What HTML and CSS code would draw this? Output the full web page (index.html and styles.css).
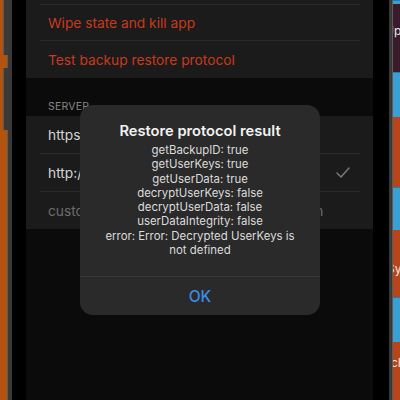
FILE: index.html
```html
<!DOCTYPE html>
<html>
<head>
<meta charset="utf-8">
<link rel="stylesheet" href="styles.css">
</head>
<body>
<div class="stage">
  <div class="left-edge">
    <div class="btn btn-a"></div>
    <div class="btn btn-b"></div>
  </div>
  <div class="frame frame-l"></div>
  <div class="bezel bezel-l"></div>
  <div class="screen">
    <div class="card">
      <div class="row row-top"></div>
      <div class="row danger">Wipe state and kill app</div>
      <div class="row danger last">Test backup restore protocol</div>
    </div>
    <div class="section-header">SERVER</div>
    <div class="card card-server">
      <div class="row">https://sync.standardnotes.org</div>
      <div class="row">http://localhost:3000
        <svg class="check" width="14" height="11" viewBox="0 0 14 11"><path d="M1 6 L5 10 L13 1" fill="none" stroke="#7c7c7c" stroke-width="1.4" stroke-linecap="round" stroke-linejoin="round"/></svg>
      </div>
      <div class="row last placeholder">custom server URL e.g. https://my-domain</div>
    </div>
    <div class="alert">
      <div class="alert-body">
        <div class="alert-title">Restore protocol result</div>
        <div class="alert-msg">getBackupID: true<br>getUserKeys: true<br>getUserData: true<br>decryptUserKeys: false<br>decryptUserData: false<br>userDataIntegrity: false<br>error: Error: Decrypted UserKeys is not defined</div>
      </div>
      <div class="alert-btn">OK</div>
    </div>
  </div>
  <div class="bezel bezel-r"></div>
  <div class="frame frame-r"></div>
  <div class="right-edge">
    <div class="seg blue s1"></div>
    <div class="seg purple s2"><span class="frag f1">Up</span></div>
    <div class="seg blue s3"></div>
    <div class="seg orange s4"></div>
    <div class="seg blue s5"></div>
    <div class="seg orange s6"><span class="frag f2">Sys</span></div>
    <div class="seg blue s7"></div>
    <div class="seg orange s8"><span class="frag f3">cH</span></div>
  </div>
</div>
</body>
</html>
```
FILE: styles.css
```css
* { box-sizing: border-box; }
html, body { margin: 0; padding: 0; }
body {
  width: 400px;
  height: 400px;
  overflow: hidden;
  background: #000;
  font-family: Inter, "Noto Sans", sans-serif;
}
.stage {
  display: flex;
  width: 400px;
  height: 400px;
}
.left-edge {
  width: 7px;
  background: #b4530d;
  position: relative;
}
.btn {
  position: absolute;
  left: 3px;
  width: 5px;
  background: #3a3a3a;
  border-left: 1px solid #5a5a5a;
  border-radius: 1px 0 0 1px;
}
.btn-a { top: -4px; height: 59px; }
.btn-b { top: 68px; height: 62px; }
.frame {
  width: 5px;
  background: #383838;
}
.frame-l { border-left: 1px solid #5c5c5c; }
.frame-r { width: 4px; border-right: 1px solid #5c5c5c; }
.bezel { background: #000; }
.bezel-l { width: 14px; }
.bezel-r { width: 16px; }
.screen {
  width: 347px;
  background: #0b0b0b;
  position: relative;
  overflow: hidden;
}
.card {
  background: #1b1b1b;
}
.row {
  display: flex;
  align-items: center;
  height: 36px;
  margin: 0 13px 0 14px;
  padding-left: 8px;
  border-bottom: 1px solid #2a2a2a;
  font-size: 13.75px;
  color: #d4d4d4;
  white-space: nowrap;
  position: relative;
}
.row-top { height: 5px; }
.row.last { border-bottom: none; height: 37px; }
.danger { color: #c9391e; }
.section-header {
  padding: 22px 0 2px 22px;
  font-size: 10.5px;
  line-height: 14px;
  letter-spacing: 0.2px;
  color: #858585;
}
.card-server .row { height: 38px; }
.card-server .row.last { height: 37px; }
.placeholder { color: #6c6c6c; }
.check {
  position: absolute;
  right: 10px;
  top: 13px;
}
.alert {
  position: absolute;
  left: 54px;
  top: 105px;
  width: 240px;
  height: 210px;
  background: #2a2a2a;
  border-radius: 13px;
  display: flex;
  flex-direction: column;
  text-align: center;
}
.alert-body {
  flex: 1;
  padding: 16px 20px 0;
}
.alert-title {
  font-size: 14.7px;
  font-weight: 600;
  line-height: 20px;
  color: #f2f2f2;
}
.alert-msg {
  margin-top: 2px;
  font-size: 11.4px;
  line-height: 14.3px;
  color: #dcdcdc;
}
.alert-btn {
  height: 39px;
  border-top: 1px solid #3a3a3a;
  display: flex;
  align-items: center;
  justify-content: center;
  font-size: 15.5px;
  font-weight: 500;
  color: #3b8de8;
}
.right-edge {
  flex: 1;
  display: flex;
  flex-direction: column;
  overflow: hidden;
}
.seg {
  overflow: hidden;
  display: flex;
  align-items: center;
  font-size: 12px;
  color: #e8e8e8;
  white-space: nowrap;
}
.blue { background: #3a9fd2; border-top: 1px solid #2a7aa8; }
.purple { background: #3a1b2c; }
.orange { background: #b8441a; }
.s1 { height: 4px; }
.s2 { height: 68px; }
.s3 { height: 45px; }
.s4 { height: 70px; }
.s5 { height: 43px; }
.s6 { height: 67px; }
.s7 { height: 45px; }
.s8 { flex: 1; }
.frag { margin-left: -1px; }
.f1 { margin-left: -8px; margin-top: -16px; }
.f2 { margin-left: -6px; margin-top: 10px; }
.f3 { margin-left: -2px; margin-top: -18px; }
```
